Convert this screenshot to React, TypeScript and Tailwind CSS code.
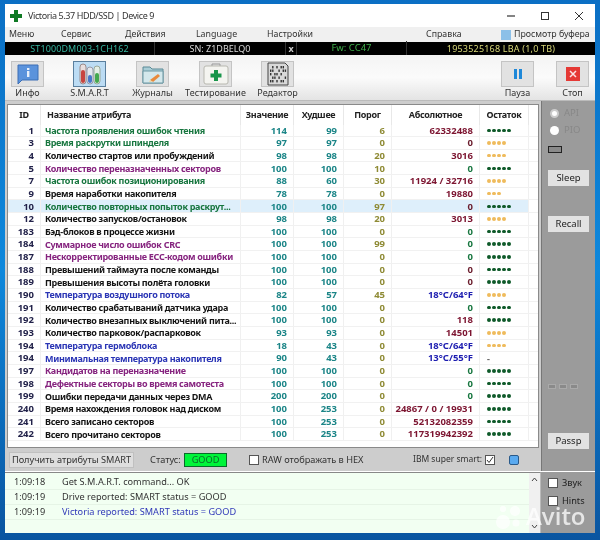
import React from "react";

const GREEN = "text-[#17763f]";
const PURPLE = "text-[#86247f]";
const BLUE = "text-[#2a35b5]";
const BLACK = "text-[#141414]";
const RED = "text-[#7c1430]";
const ZERO = "text-[#17763f]";
const ZERODK = "text-[#6a1c2c]";
const RBLUE = "text-[#1c1cb0]";

type Row = { id: number; name: string; c: string; v: number; w: number; t: number; raw: string; rc: string; dots: number; good?: boolean; sel?: boolean };
const rows: Row[] = [
  { id: 1, name: "Частота проявления ошибок чтения", c: GREEN, v: 114, w: 99, t: 6, raw: "62332488", rc: RED, dots: 5, good: true },
  { id: 3, name: "Время раскрутки шпинделя", c: GREEN, v: 97, w: 97, t: 0, raw: "0", rc: ZERODK, dots: 4 },
  { id: 4, name: "Количество стартов или пробуждений", c: BLACK, v: 98, w: 98, t: 20, raw: "3016", rc: RED, dots: 4 },
  { id: 5, name: "Количество переназначенных секторов", c: PURPLE, v: 100, w: 100, t: 10, raw: "0", rc: ZERO, dots: 5, good: true },
  { id: 7, name: "Частота ошибок позиционирования", c: GREEN, v: 88, w: 60, t: 30, raw: "11924 / 32716", rc: RED, dots: 4 },
  { id: 9, name: "Время наработки накопителя", c: BLACK, v: 78, w: 78, t: 0, raw: "19880", rc: RED, dots: 3 },
  { id: 10, name: "Количество повторных попыток раскрут...", c: GREEN, v: 100, w: 100, t: 97, raw: "0", rc: ZERODK, dots: 5, good: true, sel: true },
  { id: 12, name: "Количество запусков/остановок", c: BLACK, v: 98, w: 98, t: 20, raw: "3013", rc: RED, dots: 4 },
  { id: 183, name: "Бэд-блоков в процессе жизни", c: BLACK, v: 100, w: 100, t: 0, raw: "0", rc: ZERO, dots: 5, good: true },
  { id: 184, name: "Суммарное число ошибок CRC", c: PURPLE, v: 100, w: 100, t: 99, raw: "0", rc: ZERO, dots: 5, good: true },
  { id: 187, name: "Нескорректированные ЕСС-кодом ошибки", c: PURPLE, v: 100, w: 100, t: 0, raw: "0", rc: ZERO, dots: 5, good: true },
  { id: 188, name: "Превышений таймаута после команды", c: BLACK, v: 100, w: 100, t: 0, raw: "0", rc: ZERODK, dots: 5, good: true },
  { id: 189, name: "Превышения высоты полёта головки", c: BLACK, v: 100, w: 100, t: 0, raw: "0", rc: ZERODK, dots: 5, good: true },
  { id: 190, name: "Температура воздушного потока", c: BLUE, v: 82, w: 57, t: 45, raw: "18°C/64°F", rc: RBLUE, dots: 4 },
  { id: 191, name: "Количество срабатываний датчика удара", c: BLACK, v: 100, w: 100, t: 0, raw: "0", rc: ZERO, dots: 5, good: true },
  { id: 192, name: "Количество внезапных выключений пита...", c: BLACK, v: 100, w: 100, t: 0, raw: "118", rc: RED, dots: 5, good: true },
  { id: 193, name: "Количество парковок/распарковок", c: BLACK, v: 93, w: 93, t: 0, raw: "14501", rc: RED, dots: 4 },
  { id: 194, name: "Температура гермоблока", c: BLUE, v: 18, w: 43, t: 0, raw: "18°C/64°F", rc: RBLUE, dots: 4 },
  { id: 194, name: "Минимальная температура накопителя", c: BLUE, v: 90, w: 43, t: 0, raw: "13°C/55°F", rc: RBLUE, dots: 0 },
  { id: 197, name: "Кандидатов на переназначение", c: PURPLE, v: 100, w: 100, t: 0, raw: "0", rc: ZERO, dots: 5, good: true },
  { id: 198, name: "Дефектные секторы во время самотеста", c: PURPLE, v: 100, w: 100, t: 0, raw: "0", rc: ZERO, dots: 5, good: true },
  { id: 199, name: "Ошибки передачи данных через DMA", c: BLACK, v: 200, w: 200, t: 0, raw: "0", rc: ZERO, dots: 5, good: true },
  { id: 240, name: "Время нахождения головок над диском", c: BLACK, v: 100, w: 253, t: 0, raw: "24867 / 0 / 19931", rc: RED, dots: 5, good: true },
  { id: 241, name: "Всего записано секторов", c: BLACK, v: 100, w: 253, t: 0, raw: "52132082359", rc: RED, dots: 5, good: true },
  { id: 242, name: "Всего прочитано секторов", c: BLACK, v: 100, w: 253, t: 0, raw: "117319942392", rc: RED, dots: 5, good: true },
];

const InfoIcon = () => (
  <svg width="24" height="22" viewBox="0 0 24 22">
    <path d="M2 2h20v15H6l-4 4z" fill="#5b93dc" stroke="#3d6fb5" />
    <rect x="11" y="5" width="2.4" height="2" fill="#e8f0fb" />
    <rect x="11" y="8" width="2.4" height="6" fill="#e8f0fb" />
  </svg>
);
const SmartIcon = () => (
  <svg width="26" height="24" viewBox="0 0 26 24">
    <rect x="3" y="2" width="6" height="20" rx="3" fill="#e8dede" stroke="#9a8a8a" />
    <rect x="4" y="8" width="4" height="13" rx="2" fill="#c8453f" />
    <rect x="10" y="5" width="6" height="17" rx="3" fill="#e4e8ee" stroke="#9a9aa8" />
    <rect x="11" y="13" width="4" height="8" rx="2" fill="#4a78c8" />
    <rect x="17" y="4" width="6" height="18" rx="3" fill="#e4eee4" stroke="#9aa89a" />
    <rect x="18" y="11" width="4" height="10" rx="2" fill="#45a84f" />
  </svg>
);
const JournalIcon = () => (
  <svg width="26" height="24" viewBox="0 0 26 24">
    <path d="M3 5h7l2 2h11v14H3z" fill="#a9cdd6" stroke="#5a8a96" />
    <path d="M3 9h20v12H3z" fill="#d4e8ec" stroke="#6c98a4" />
    <path d="M10 18l8-6 2 2-7 6z" fill="#e88a3c" />
    <path d="M9 20l1-2 3 2z" fill="#e8d8b0" />
  </svg>
);
const TestIcon = () => (
  <svg width="28" height="22" viewBox="0 0 28 22">
    <path d="M10 3V1h8v2" fill="none" stroke="#999" />
    <rect x="2" y="3" width="24" height="18" rx="2" fill="#f4f4f0" stroke="#b8b8b0" />
    <path d="M12 7h4v3.5h3.5v4H16V18h-4v-3.5H8.500v-4H12z" fill="#18954a" />
  </svg>
);
const EditorIcon = () => {
  const lines = ["01010110", "11001011", "10110100", "01101001", "11010110"];
  return (
    <svg width="26" height="24" viewBox="0 0 26 24">
      <path d="M3 1h17l3 3v19H3z" fill="#d8d8d8" stroke="#444" />
      {lines.map((l, i) =>
        l.split("").map((b, j) =>
          b === "1" ? <rect key={`${i}${j}`} x={5 + j * 2.1} y={4 + i * 3.5} width="1.4" height="2.4" fill="#333" /> : null
        )
      )}
    </svg>
  );
};

const ToolBtn = ({ label, children, active, w }: { label: string; children: React.ReactNode; active?: boolean; w: string }) => (
  <div className={`flex flex-col items-center ${w}`}>
    <div className={`w-[33px] h-[26px] shrink-0 flex items-center justify-center border ${active ? "bg-[#bcdcf4] border-[#5a7f9e]" : "bg-[#e2e2e2] border-[#c4c4c4]"}`}>
      {children}
    </div>
    <span className="text-[9px] leading-[11px] text-[#333] whitespace-nowrap">{label}</span>
  </div>
);

const Check = ({ checked }: { checked?: boolean }) => (
  <span className="w-[10px] h-[10px] border border-[#555] bg-white inline-flex items-center justify-center shrink-0">
    {checked && (
      <svg width="8" height="8" viewBox="0 0 8 8">
        <path d="M1 4l2 2.500L7 1" fill="none" stroke="#333" strokeWidth="1" />
      </svg>
    )}
  </span>
);

const head = "flex items-center justify-center border-r border-[#e8e8e8] text-[9px] tracking-[-0.3px] font-bold text-[#222] whitespace-nowrap";
const cell = "flex items-center justify-end border-r border-[#f0f0f0] text-[9.5px]";

export default function App() {
  return (
    <div className="relative w-[600px] h-[540px] overflow-hidden bg-gradient-to-b from-[#0b6fc4] via-[#0e88dc] to-[#0a55a0] pt-[4px] px-[5px] pb-[7px] font-['Noto_Sans','DejaVu_Sans',sans-serif]">
      <div className="h-[529px] bg-[#f0f0f0] flex flex-col blur-[0.3px]">
        {/* title */}
        <div className="h-[23px] shrink-0 bg-white flex items-center pl-[5px] text-[#333]">
          <svg width="12" height="12" viewBox="0 0 12 12" className="shrink-0">
            <path d="M4 0h4v4h4v4H8v4H4V8H0V4h4z" fill="#0f7a24" />
          </svg>
          <span className="ml-[6px] text-[9px] tracking-[-0.4px] whitespace-nowrap">Victoria 5.37 HDD/SSD | Device 9</span>
          <div className="ml-auto flex items-center gap-[26px] pr-[12px]">
            <svg width="8" height="10" viewBox="0 0 8 10"><path d="M0 5h8" stroke="#333" strokeWidth="1.200" /></svg>
            <svg width="8" height="10" viewBox="0 0 8 10"><rect x="0.500" y="1.500" width="7" height="7" fill="none" stroke="#333" /></svg>
            <svg width="8" height="10" viewBox="0 0 8 10"><path d="M0 1l8 8M8 1l-8 8" stroke="#333" /></svg>
          </div>
        </div>
        {/* menu */}
        <div className="h-[15px] shrink-0 flex items-center pl-[4px] text-[8.8px] text-[#333] whitespace-nowrap">
          <span className="w-[52px]">Меню</span>
          <span className="w-[64px]">Сервис</span>
          <span className="w-[71px]">Действия</span>
          <span className="w-[71px]">Language</span>
          <span className="w-[159px]">Настройки</span>
          <span className="w-[75px]">Справка</span>
          <span className="w-[10px] h-[10px] bg-[#8cc0e8] mr-[3px]" />
          <span>Просмотр буфера</span>
        </div>
        {/* drive bar */}
        <div className="h-[13px] shrink-0 bg-black flex items-center whitespace-nowrap">
          <span className="w-[150px] text-[9px] tracking-[0.1px] text-center text-[#35b5a0] border-r border-[#333]">ST1000DM003-1CH162</span>
          <span className="w-[131px] text-[9px] text-center text-[#d8d8d8] border-r border-[#333]">SN: Z1DBELQ0</span>
          <span className="w-[11px] text-[9px] text-center text-[#ccc] font-bold border-r border-[#333]">x</span>
          <span className="w-[110px] text-[9.5px] text-center text-[#3fae4a] border-r border-[#333]">Fw: CC47</span>
          <span className="flex-1 text-[9px] tracking-[0.2px] text-center text-[#d8d878]">1953525168 LBA (1,0 TB)</span>
        </div>
        {/* toolbar */}
        <div className="h-[46px] shrink-0 pt-[6px] bg-gradient-to-b from-[#f4f4f4] via-[#fbfbfb] to-[#e4e4e4] border-b border-[#bbb] flex items-start pl-[6px]">
          <ToolBtn label="Инфо" w="w-[33px]"><InfoIcon /></ToolBtn>
          <div className="ml-[29px]"><ToolBtn label="S.M.A.R.T" active w="w-[33px]"><SmartIcon /></ToolBtn></div>
          <div className="ml-[30px]"><ToolBtn label="Журналы" w="w-[33px]"><JournalIcon /></ToolBtn></div>
          <div className="ml-[30px]"><ToolBtn label="Тестирование" w="w-[33px]"><TestIcon /></ToolBtn></div>
          <div className="ml-[29px]"><ToolBtn label="Редактор" w="w-[33px]"><EditorIcon /></ToolBtn></div>
          <div className="ml-[207px]">
            <ToolBtn label="Пауза" w="w-[33px]">
              <svg width="12" height="12" viewBox="0 0 12 12"><path d="M2 1h3v10H2zM7 1h3v10H7z" fill="#1f88d8" /></svg>
            </ToolBtn>
          </div>
          <div className="ml-[22px]">
            <ToolBtn label="Стоп" w="w-[33px]">
              <svg width="14" height="14" viewBox="0 0 14 14"><rect width="14" height="14" fill="#e53935" /><path d="M4 4l6 6M10 4l-6 6" stroke="#fbe4e4" strokeWidth="1.500" /></svg>
            </ToolBtn>
          </div>
        </div>
        {/* main */}
        <div className="flex h-[370px] shrink-0">
          <div className="w-[536px] bg-[#cdcdcd] flex flex-col">
            <div className="mt-[3px] mx-[2px] h-[344px] bg-white border border-[#8a8a8a] flex flex-col overflow-hidden">
              <div className="flex h-[19.500px] shrink-0">
                <div className={`${head} w-[33px]`}>ID</div>
                <div className={`${head} w-[200px] !justify-start pl-[6px]`}>Название атрибута</div>
                <div className={`${head} w-[53px]`}>Значение</div>
                <div className={`${head} w-[50px]`}>Худшее</div>
                <div className={`${head} w-[48px]`}>Порог</div>
                <div className={`${head} w-[88px]`}>Абсолютное</div>
                <div className={`${head} w-[49px]`}>Остаток</div>
              </div>
              {rows.map((r, i) => (
                <div key={i} className="flex h-[12.67px] shrink-0 font-bold leading-none border-b border-[#f1f1f1]">
                  <div className={`flex flex-1 ${r.sel ? "bg-[#deeffb]" : ""} max-w-[521px]`}>
                    <div className={`${cell} w-[33px] pr-[6px] text-[#22224a]`}>{r.id}</div>
                    <div className={`flex items-center border-r border-[#f0f0f0] w-[200px] pl-[4px] text-[9px] tracking-[-0.3px] whitespace-nowrap ${r.c}`}>{r.name}</div>
                    <div className={`${cell} w-[53px] pr-[6px] text-[#1b8587]`}>{r.v}</div>
                    <div className={`${cell} w-[50px] pr-[6px] text-[#1b8587]`}>{r.w}</div>
                    <div className={`${cell} w-[48px] pr-[6px] text-[#8f8b35]`}>{r.t}</div>
                    <div className={`${cell} w-[88px] pr-[6px] whitespace-nowrap ${r.rc}`}>{r.raw}</div>
                    <div className="flex items-center w-[49px] pl-[7px] border-r border-[#f0f0f0] gap-[1.500px]">
                      {r.dots === 0 ? (
                        <span className="text-[9px] text-[#666]">-</span>
                      ) : (
                        Array.from({ length: r.dots }).map((_, k) => (
                          <span key={k} className={`w-[3.500px] h-[3.500px] rounded-full ${r.good ? "bg-[#0f5a2a]" : "bg-[#efbb5c]"}`} />
                        ))
                      )}
                    </div>
                  </div>
                </div>
              ))}
            </div>
            <div className="flex-1 flex items-center pl-[4px] text-[9.2px] text-[#333] whitespace-nowrap">
              <div className="w-[125px] shrink-0 h-[16px] bg-[#dedede] border border-[#c0c0c0] flex items-center justify-center">Получить атрибуты SMART</div>
              <span className="ml-[16px] w-[30px] shrink-0">Статус:</span>
              <div className="ml-[4px] w-[43px] shrink-0 h-[14px] bg-[#00f53a] border border-[#0a6a2a] flex items-center justify-center text-[#0b6a2a]">GOOD</div>
              <span className="ml-[22px] flex"><Check /></span>
              <span className="ml-[3px] w-[101px] shrink-0">RAW отображать в HEX</span>
              <span className="ml-[50px] w-[68px] shrink-0 text-[8.500px]">IBM super smart:</span>
              <span className="ml-[4px] flex"><Check checked /></span>
              <span className="ml-[14px] w-[10px] h-[10px] shrink-0 rounded-[2px] bg-[#5aaaf0] border border-[#2a5a8a]" />
            </div>
          </div>
          <div className="w-[54px] bg-[#9b9b9b] border-l border-[#777] flex flex-col pl-[6px] text-[9.5px] leading-[14px]">
            <div className="mt-[5px] pl-[2px] h-[14px] flex items-center gap-[5px] text-[#888]">
              <span className="w-[9px] h-[9px] rounded-full bg-white border-[2px] border-[#ccc]" /><span>API</span>
            </div>
            <div className="mt-[3px] pl-[2px] h-[14px] flex items-center gap-[5px] text-[#888]">
              <span className="w-[9px] h-[9px] rounded-full bg-white" /><span>PIO</span>
            </div>
            <div className="mt-[9px] w-[14px] h-[7px] bg-[#8a8a8a] border border-[#222]" />
            <div className="mt-[17px] w-[41px] h-[16px] bg-[#e2e2e2] flex items-center justify-center text-[#222]">Sleep</div>
            <div className="mt-[30px] w-[41px] h-[16px] bg-[#e2e2e2] flex items-center justify-center text-[#222]">Recall</div>
            <div className="mt-[152px] flex gap-[3px]">
              <span className="w-[8px] h-[5px] bg-[#8a8a8a] border border-[#aaa]" />
              <span className="w-[8px] h-[5px] bg-[#8a8a8a] border border-[#aaa]" />
              <span className="w-[8px] h-[5px] bg-[#8a8a8a] border border-[#aaa]" />
            </div>
            <div className="mt-[44px] w-[41px] h-[16px] bg-[#e2e2e2] flex items-center justify-center text-[#222]">Passp</div>
          </div>
        </div>
        {/* log */}
        <div className="flex-1 flex bg-white pt-[1px] min-h-0">
          <div className="w-[536px] relative bg-[#f2fff2] border-t border-[#888] border-r border-r-[#bbb] flex text-[9.2px]">
            <div className="flex-1 pt-[2px]">
              {[
                ["1:09:18", "Get S.M.A.R.T. command... OK", "text-[#333]"],
                ["1:09:19", "Drive reported: SMART status = GOOD", "text-[#333]"],
                ["1:09:19", "Victoria reported: SMART status = GOOD", "text-[#3038b8]"],
              ].map(([t, m, c], i) => (
                <div key={i} className="h-[15px] flex items-center border-b border-[#e6f4e6]">
                  <span className="w-[57px] pl-[9px] text-[#333]">{t}</span>
                  <span className={`whitespace-nowrap ${c}`}>{m}</span>
                </div>
              ))}
            </div>
            <div className="w-[11px] bg-[#f0f0f0] flex flex-col items-center justify-between py-[4px]">
              <svg width="7" height="5" viewBox="0 0 7 5"><path d="M1 4l2.500-3L6 4" fill="none" stroke="#444" /></svg>
              <svg width="7" height="5" viewBox="0 0 7 5"><path d="M1 1l2.500 3L6 1" fill="none" stroke="#444" /></svg>
            </div>
          </div>
          <div className="flex-1 bg-[#9b9b9b] pl-[7px] pt-[6px] text-[9.2px] leading-[10px] text-[#222] flex flex-col gap-[8px]">
            <div className="flex items-center gap-[4px]"><Check /><span>Звук</span></div>
            <div className="flex items-center gap-[4px]"><Check /><span>Hints</span></div>
          </div>
        </div>
      </div>
      {/* watermark */}
      <div className="absolute left-[494px] top-[501px] flex items-center opacity-75 text-white pointer-events-none">
        <svg width="30" height="30" viewBox="0 0 30 30">
          <circle cx="9" cy="21" r="7" fill="#fff" />
          <circle cx="21" cy="10" r="5" fill="#fff" />
          <circle cx="9" cy="8" r="3" fill="#fff" />
          <circle cx="22" cy="22" r="3.500" fill="#fff" />
        </svg>
        <span className="text-[24px] leading-none font-semibold font-['Open_Sans',sans-serif] ml-[2px]">Avito</span>
      </div>
    </div>
  );
}
